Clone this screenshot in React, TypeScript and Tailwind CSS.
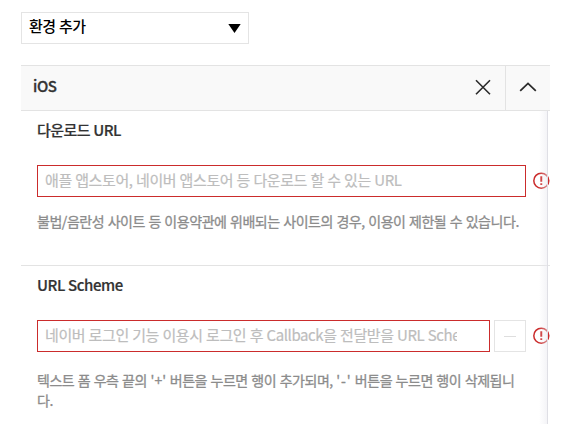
import React from "react";

function ErrorIcon() {
  return (
    <svg className="relative z-10 -mt-px block h-[17px] w-[17px] shrink-0" viewBox="0 0 17 17" fill="none" stroke="#cb2c2c">
      <circle cx="8.3" cy="8.7" r="7.5" strokeWidth="1.5" />
      <path d="M8.3 4.2v5.6M8.3 11.2v1.9" strokeWidth="1.9" />
    </svg>
  );
}

export default function App() {
  return (
    <div className="h-[441px] w-[587px] overflow-hidden bg-white pl-[21px] pt-3 font-['Noto_Sans_CJK_KR',sans-serif] text-[14px] text-[#333]">
      <button className="flex h-8 w-[228px] items-center justify-between border border-[#e4e4e4] bg-white pl-[7px] pr-[7px] text-black">
        <span className="-mt-1 whitespace-nowrap text-[15px] font-medium leading-[26px] tracking-[-0.6px] [word-spacing:0.8px]">환경 추가</span>
        <svg className="h-[9px] w-[13px]" viewBox="0 0 13 9">
          <path d="M0.3 0h12.4L6.5 9z" fill="#000" />
        </svg>
      </button>

      <section className="mt-[21px] w-[529px]">
        <header className="flex h-[46px] items-stretch border-y border-[#e3e3e3] bg-[#f9f9f9]">
          <h2 className="flex-1 pl-3 text-[15px] font-medium leading-[40px] tracking-[-0.4px] [-webkit-text-stroke:0.3px]">iOS</h2>
          <button className="flex w-[45px] items-center justify-center" aria-label="삭제">
            <svg className="-mt-[3px] h-4 w-4" viewBox="0 0 16 16" fill="none" stroke="#2b2b2b" strokeWidth="1.6">
              <path d="M1 1.2l14 14M15 1.2l-14 14" />
            </svg>
          </button>
          <button className="flex w-[45px] items-center justify-center border-l border-[#e3e3e3]" aria-label="접기">
            <svg className="-mt-[3px] h-4 w-[18px]" viewBox="0 0 18 16" fill="none" stroke="#2b2b2b" strokeWidth="1.8">
              <path d="M1.2 11.8L9 4.4l7.8 7.4" />
            </svg>
          </button>
        </header>

        <div className="relative h-[313px]">
          <div className="h-[155px] border-b border-[#e3e3e3] pl-4 pt-[9px]">
            <h3 className="h-5 whitespace-nowrap text-[15px] font-medium leading-5 tracking-[-0.55px] [-webkit-text-stroke:0.2px] [word-spacing:0.5px]">다운로드 URL</h3>
            <div className="mt-[25px] flex h-8 items-center">
              <div className="h-8 w-[489px] border border-[#cb2c2c] bg-white px-[7px]">
                <p className="overflow-hidden whitespace-nowrap text-[15px] leading-[28px] tracking-[-0.4px] text-[#bdbdbd] [-webkit-text-stroke:0.2px] [word-spacing:0.45px]">애플 앱스토어, 네이버 앱스토어 등 다운로드 할 수 있는 URL</p>
              </div>
              <div className="ml-[7px]"><ErrorIcon /></div>
            </div>
            <p className="mt-[14px] whitespace-nowrap text-[14px] leading-5 tracking-[-0.45px] text-[#8c8c8c] [-webkit-text-stroke:0.3px] [word-spacing:0.8px]">불법/음란성 사이트 등 이용약관에 위배되는 사이트의 경우, 이용이 제한될 수 있습니다.</p>
          </div>
          <div className="pl-4 pt-[9px]">
            <h3 className="h-5 whitespace-nowrap text-[15px] font-medium leading-5 tracking-[-0.4px] [-webkit-text-stroke:0.2px]">URL Scheme</h3>
            <div className="mt-[25px] flex h-8 items-center">
              <div className="h-8 w-[453px] border border-[#cb2c2c] bg-white pl-[7px] pr-8">
                <p className="overflow-hidden whitespace-nowrap text-[15px] leading-[28px] tracking-[-0.4px] text-[#bdbdbd] [-webkit-text-stroke:0.2px] [word-spacing:0.45px]">네이버 로그인 기능 이용시 로그인 후 Callback을 전달받을 URL Scheme</p>
              </div>
              <button className="ml-1 flex h-8 w-8 items-center justify-center border border-[#e4e4e4] bg-white" aria-label="행 삭제">
                <span className="h-px w-3 bg-[#dedede]" />
              </button>
              <div className="ml-[7px]"><ErrorIcon /></div>
            </div>
            <p className="mt-[18px] whitespace-nowrap text-[14px] leading-5 tracking-[-0.45px] text-[#8c8c8c] [-webkit-text-stroke:0.3px] [word-spacing:0.8px]">
              텍스트 폼 우측 끝의 <span className="tracking-[0.1px]">'+'</span> 버튼을 누르면 행이 추가되며, <span className="tracking-[0.8px]">'-'</span> 버튼을 누르면 행이 삭제됩니<br />다.
            </p>
          </div>
          <div className="pointer-events-none absolute right-[2px] top-0 z-20 h-[313px] w-[9px] border-r border-[#dfdfe5] bg-linear-to-r from-transparent to-[#e9e9ef]/50" />
        </div>
      </section>
    </div>
  );
}
